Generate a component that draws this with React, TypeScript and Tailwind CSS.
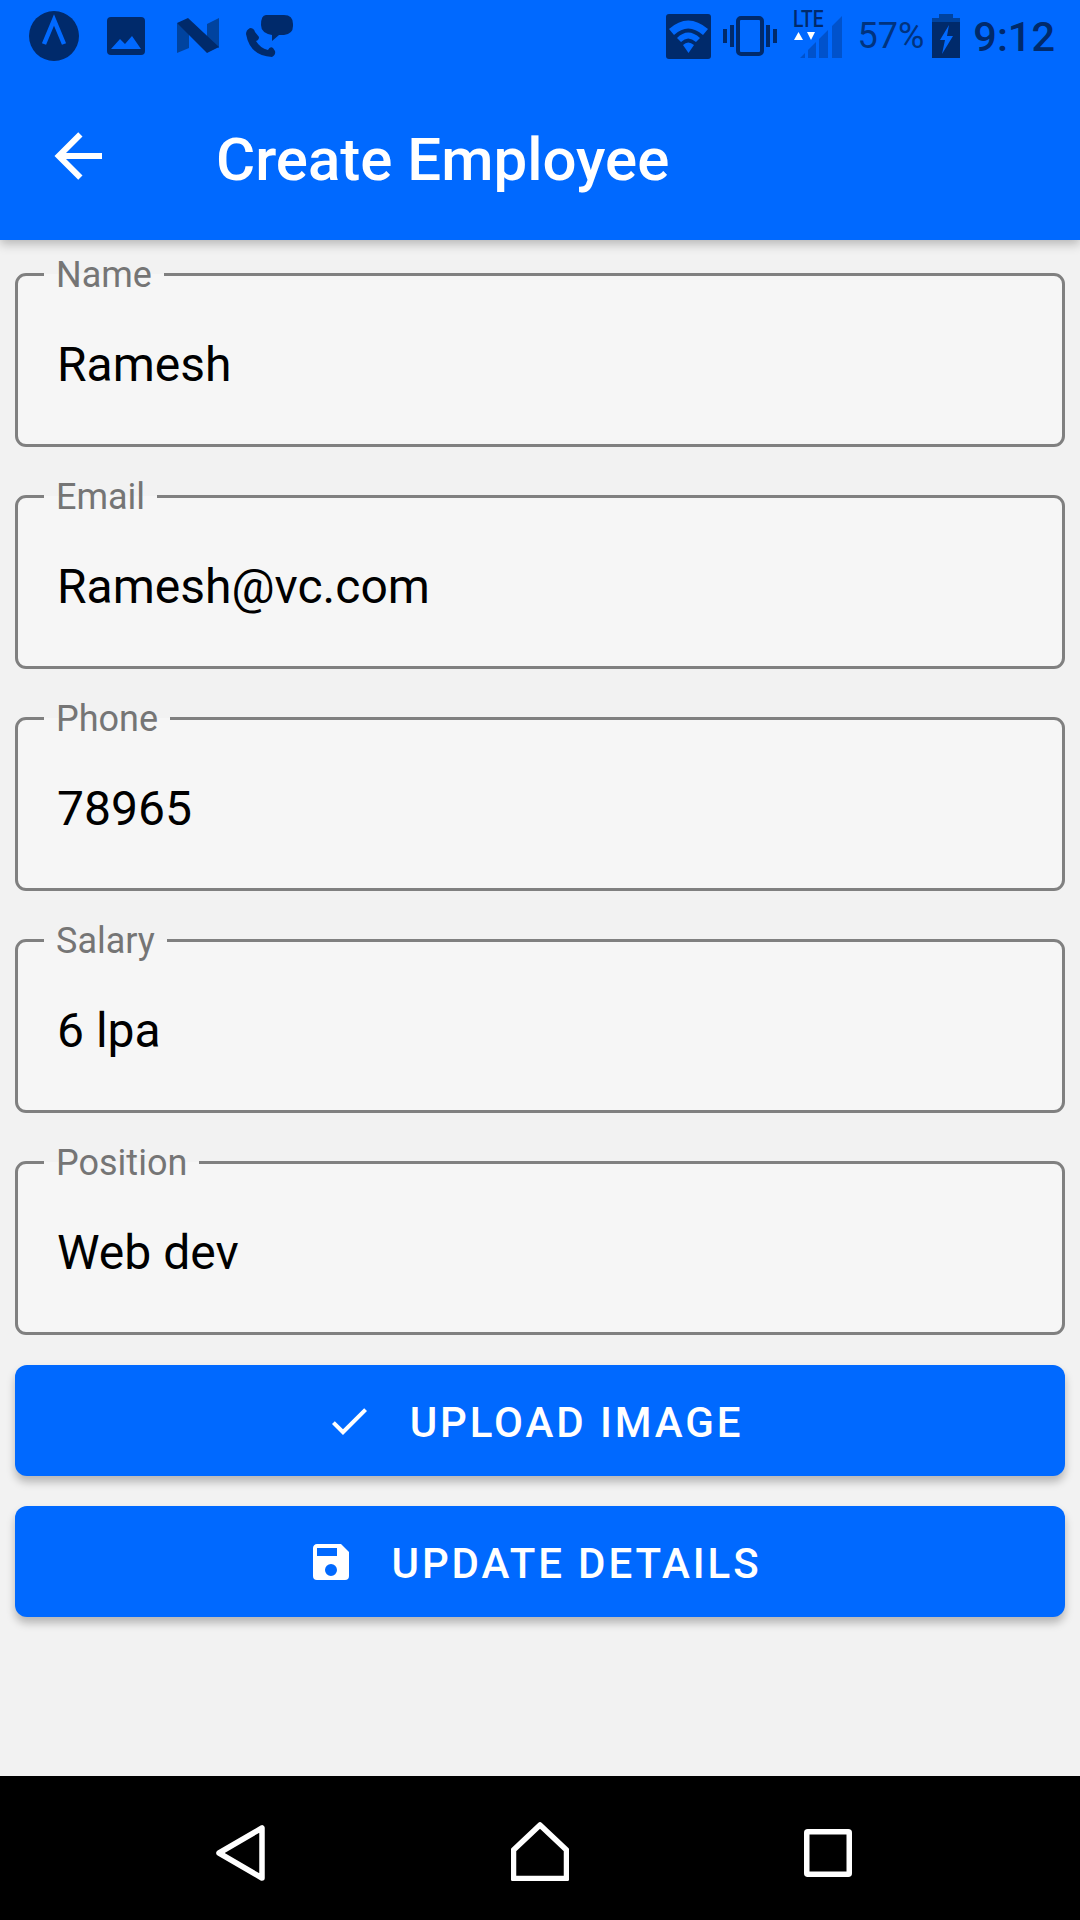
const font = { fontFamily: 'Roboto, "Liberation Sans", sans-serif' };
const DARK = '#002a6b';

function Field({ label, value }: { label: string; value: string }) {
  return (
    <div className="relative h-[174px] rounded-[11px] border-[3px] border-[#808080] bg-[#f6f6f6] pl-[39px] pt-[61px]">
      <span className="absolute left-[26px] top-[-22px] bg-[linear-gradient(#f2f2f2_0,#f2f2f2_20px,#f6f6f6_20px)] px-[12px] text-[36px] leading-[42px] text-[#757575]">
        {label}
      </span>
      <div className="text-[48px] leading-[56px] text-black">{value}</div>
    </div>
  );
}

function AppButton({ icon, label }: { icon: React.ReactNode; label: string }) {
  return (
    <div className="flex h-[111px] items-center justify-center rounded-[12px] bg-[#0069ff] pr-[12px] shadow-[0_6px_8px_rgba(0,0,0,0.25)]">
      {icon}
      <span className="ml-[37px] mt-[3px] text-[42px] font-medium leading-[49px] tracking-[2.9px] text-white">{label}</span>
    </div>
  );
}

function StatusLeft() {
  return (
    <div className="flex items-center">
      <svg className="ml-[29px] h-[50px] w-[50px]" viewBox="0 0 50 50">
        <circle cx="25" cy="25" r="25" fill={DARK} />
        <path d="M15 33 L25 9 L35 33" fill="none" stroke="#0069ff" strokeWidth="4.5" />
      </svg>
      <svg className="ml-[28px] h-[38px] w-[38px]" viewBox="0 0 38 38">
        <rect width="38" height="38" rx="4" fill={DARK} />
        <path d="M4 32 L13 22 L18 27 L25 19 L34 32 Z" fill="#0069ff" />
      </svg>
      <svg className="ml-[32px] h-[36px] w-[42px]" viewBox="0 0 42 36">
        <path d="M0 5 L12 12 V30 L0 35 Z" fill="#00439f" />
        <path d="M30 6 L42 0 V30 L30 25 Z" fill="#00439f" />
        <path d="M0 5 L11 0 L42 29 L30 35 Z" fill={DARK} />
      </svg>
      <svg className="ml-[27px] h-[43px] w-[47px]" viewBox="0 0 47 43">
        <path d="M20 0 H38 Q47 0 47 9 V11 Q47 19 38 20 H33 L26 26 V20 Q15 18 15 10 Q15 0 20 0 Z" fill={DARK} />
        <path d="M4 13 Q8 13 9 17 L13 22 Q13 25 10 26 Q14 33 22 35 Q24 31 27 33 L29 36 Q30 40 26 42 Q4 41 0 19 Q0 15 4 13 Z" fill={DARK} />
      </svg>
    </div>
  );
}

function StatusRight() {
  return (
    <div className="flex items-center">
      <svg className="h-[45px] w-[45px]" viewBox="0 0 45 45">
        <rect width="45" height="45" rx="3" fill={DARK} />
        <path d="M3 15 Q22 -2 42 15 L37 21 Q22 8 8 21 Z" fill="#0069ff" />
        <path d="M11 24 Q22 13 34 24 L30 28 Q22 21 15 28 Z" fill="#0069ff" />
        <path d="M17 31 Q22 26 28 31 L22.5 39 Z" fill="#0069ff" />
      </svg>
      <svg className="ml-[12px] h-[40px] w-[54px]" viewBox="0 0 54 40">
        <rect x="15" y="2" width="24" height="36" rx="3" fill="none" stroke={DARK} strokeWidth="4" />
        <rect x="0" y="13" width="4" height="14" fill={DARK} />
        <rect x="7" y="9" width="4" height="22" fill={DARK} />
        <rect x="43" y="9" width="4" height="22" fill={DARK} />
        <rect x="50" y="13" width="4" height="14" fill={DARK} />
      </svg>
      <div className="relative mb-[4px] ml-[16px] h-[48px] w-[49px]">
        <svg className="absolute left-0 top-0 h-[48px] w-[49px]" viewBox="0 0 49 48">
          <path d="M7 48 L12 43 V48 Z M15 40 L23 32 V48 H15 Z M26 29 L35 20 V48 H26 Z M39 16 L49 6 V48 H39 Z" fill="#0052cc" />
          <path d="M1 30 L10 30 L5.5 22 Z M14 22 L22 22 L18 30 Z" fill="#ffffff" />
        </svg>
        <span className="absolute left-0 top-[-3px] origin-left scale-x-[0.8] text-[24px] font-medium leading-[24px] text-[#002a6b]">LTE</span>
      </div>
      <span className="ml-[15px] text-[36px] leading-[44px] text-[#00337f]">57%</span>
      <svg className="ml-[8px] h-[44px] w-[28px]" viewBox="0 0 28 44">
        <rect x="7" y="0" width="14" height="4" fill="#00439f" />
        <rect x="0" y="4" width="28" height="4" fill="#00439f" />
        <rect x="0" y="8" width="28" height="36" fill={DARK} />
        <path d="M17 11 L8 26 H13 L10 40 L21 22 H15 Z" fill="#0069ff" />
      </svg>
      <span className="ml-[13px] mr-[25px] text-[41.5px] font-medium leading-[49px] text-[#002a6b]">9:12</span>
    </div>
  );
}

export default function App() {
  const fields = [
    ['Name', 'Ramesh'],
    ['Email', 'Ramesh@vc.com'],
    ['Phone', '78965'],
    ['Salary', '6 lpa'],
    ['Position', 'Web dev'],
  ];
  return (
    <div className="flex h-[1920px] w-[1080px] flex-col overflow-hidden bg-[#f2f2f2]" style={font}>
      <header className="relative z-10 h-[240px] shrink-0 bg-[#0069ff] shadow-[0_4px_10px_rgba(0,0,0,0.25)]">
        <div className="flex h-[72px] items-center justify-between">
          <StatusLeft />
          <StatusRight />
        </div>
        <div className="flex h-[168px] items-start">
          <svg className="ml-[42px] mt-[48px] h-[72px] w-[72px]" viewBox="0 0 24 24" fill="#ffffff">
            <path d="M20,11V13H8L13.5,18.5L12.08,19.92L4.16,12L12.08,4.08L13.5,5.5L8,11H20Z" />
          </svg>
          <h1 className="ml-[102px] mt-[53px] text-[60px] font-medium leading-[70px] text-white">Create Employee</h1>
        </div>
      </header>
      <main className="flex flex-1 flex-col px-[15px] pt-[33px]">
        <div className="flex flex-col gap-[48px]">
          {fields.map(([l, v]) => (
            <Field key={l} label={l} value={v} />
          ))}
        </div>
        <div className="mt-[30px] flex flex-col gap-[30px]">
          <AppButton
            label="UPLOAD IMAGE"
            icon={
              <svg className="h-[48px] w-[48px]" viewBox="0 0 24 24" fill="#ffffff">
                <path d="M21,7L9,19L3.5,13.5L4.91,12.09L9,16.17L19.59,5.59L21,7Z" />
              </svg>
            }
          />
          <AppButton
            label="UPDATE DETAILS"
            icon={
              <svg className="h-[48px] w-[48px]" viewBox="0 0 24 24" fill="#ffffff">
                <path d="M15,9H5V5H15M12,19A3,3 0 0,1 9,16A3,3 0 0,1 12,13A3,3 0 0,1 15,16A3,3 0 0,1 12,19M17,3H5C3.89,3 3,3.9 3,5V19A2,2 0 0,0 5,21H19A2,2 0 0,0 21,19V7L17,3Z" />
              </svg>
            }
          />
        </div>
      </main>
      <nav className="flex h-[144px] shrink-0 items-center justify-between bg-black pl-[216px] pr-[228px] pt-[10px]">
        <svg className="h-[56px] w-[49px]" viewBox="0 0 49 56">
          <path d="M46 3 V53 L3 28 Z" fill="none" stroke="#ffffff" strokeWidth="5.5" strokeLinejoin="round" />
        </svg>
        <svg className="mb-[3px] ml-[10px] h-[59px] w-[58px]" viewBox="0 0 58 59">
          <path d="M29 3 L55.5 28 V56.5 H2.5 V28 Z" fill="none" stroke="#ffffff" strokeWidth="5.5" strokeLinejoin="round" />
        </svg>
        <svg className="h-[48px] w-[48px]" viewBox="0 0 48 48">
          <rect x="2.75" y="2.75" width="42.5" height="42.5" rx="1" fill="none" stroke="#ffffff" strokeWidth="5.5" />
        </svg>
      </nav>
    </div>
  );
}
